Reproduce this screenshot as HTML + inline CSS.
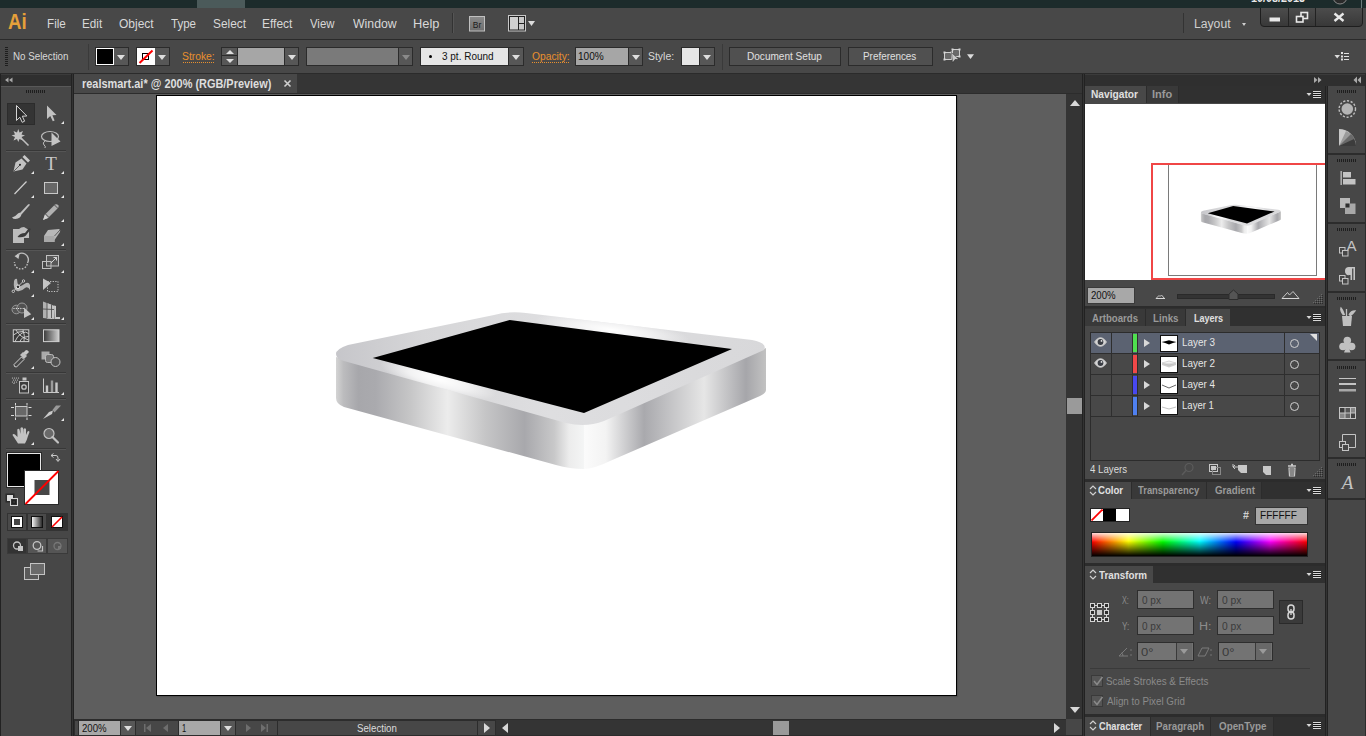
<!DOCTYPE html>
<html><head><meta charset="utf-8">
<style>
*{box-sizing:border-box;margin:0;padding:0}
html,body{width:1366px;height:736px;overflow:hidden;background:#484848;font-family:"Liberation Sans",sans-serif;font-size:12px;color:#dcdcdc}
.a{position:absolute}
.mi{position:absolute;top:16px;font-size:12px;color:#d8d8d8;line-height:16px}
.w{position:absolute;border:1px solid #2b2b2b;background:#575757}
.dd{position:absolute;top:0;bottom:0;background:#575757}
.dd:after{content:"";position:absolute;left:50%;top:50%;margin-left:-4px;margin-top:-2px;border-left:4px solid transparent;border-right:4px solid transparent;border-top:5px solid #dedede}
.dd.dis:after{border-top-color:#8a8a8a}
.lbl{position:absolute;font-size:11px;line-height:13px;color:#d8d8d8}
.org{color:#e8902e}
.dot{border-bottom:1px dotted #e8902e}
.btn{position:absolute;border:1px solid #2b2b2b;background:#505050;color:#e0e0e0;font-size:11px;text-align:center;line-height:17px}
.sep{position:absolute;width:1px;background:#3a3a3a}

</style></head><body>
<!-- taskbar strip -->
<div class="a" style="left:0;top:0;width:1366px;height:8px;background:#1c2b2b"></div>
<div class="a" style="left:197px;top:0;width:48px;height:8px;background:#4b5a5a"></div>
<!-- menu bar -->
<div class="a" style="left:0;top:8px;width:1366px;height:31px;background:#484848"></div>
<div class="a" style="left:0;top:39px;width:1366px;height:1px;background:#2a2a2a"></div>
<!-- control bar -->
<div class="a" style="left:0;top:40px;width:1366px;height:33px;background:#484848"></div>
<div class="a" style="left:0;top:73px;width:1366px;height:1px;background:#2b2b2b"></div>

<!-- control bar content -->
<div class="a" style="left:5px;top:47px;width:3px;height:20px;background:repeating-linear-gradient(#1e1e1e 0 1px,transparent 1px 2px)"></div>
<div class="sep" style="left:88px;top:44px;height:26px"></div>
<div class="w" style="left:95px;top:47px;width:34px;height:19px">
 <div class="a" style="left:0;top:0;width:18px;height:17px;background:#000;border:1px solid #fff"></div>
 <div class="dd" style="left:18px;width:14px"></div>
</div>
<div class="w" style="left:136px;top:47px;width:34px;height:19px">
 <div class="a" style="left:0;top:0;width:18px;height:17px;background:#fff"></div>
 <div class="a" style="left:5px;top:5px;width:7px;height:7px;border:1px solid #000"></div>
 <svg class="a" style="left:0;top:0" width="18" height="17"><line x1="2.5" y1="15" x2="15.5" y2="2.5" stroke="#f00" stroke-width="2"/></svg>
 <div class="dd" style="left:18px;width:14px"></div>
</div>
<div class="w" style="left:221px;top:47px;width:78px;height:19px">
 <div class="a" style="left:0;top:0;width:15px;height:8px;background:#575757;border-bottom:1px solid #2b2b2b"></div>
 <div class="a" style="left:4px;top:2px;border-left:4px solid transparent;border-right:4px solid transparent;border-bottom:4px solid #dedede"></div>
 <div class="a" style="left:0;top:9px;width:15px;height:8px;background:#575757"></div>
 <div class="a" style="left:4px;top:11px;border-left:4px solid transparent;border-right:4px solid transparent;border-top:4px solid #dedede"></div>
 <div class="a" style="left:15px;top:0;width:47px;height:17px;background:#a6a6a6;border-left:1px solid #2b2b2b"></div>
 <div class="dd" style="left:62px;width:14px;border-left:1px solid #2b2b2b"></div>
</div>
<div class="w" style="left:306px;top:47px;width:107px;height:19px">
 <div class="a" style="left:0;top:0;width:91px;height:17px;background:#7a7a7a"></div>
 <div class="dd dis" style="left:91px;width:14px;border-left:1px solid #2b2b2b"></div>
</div>
<div class="w" style="left:420px;top:47px;width:104px;height:19px">
 <div class="a" style="left:0;top:0;width:87px;height:17px;background:#e6e6e6"></div>
 <div class="a" style="left:8px;top:7px;width:3px;height:3px;border-radius:50%;background:#000"></div>
 <div class="dd" style="left:87px;width:15px;border-left:1px solid #2b2b2b"></div>
</div>
<div class="w" style="left:575px;top:47px;width:68px;height:19px">
 <div class="a" style="left:0;top:0;width:52px;height:17px;background:#a6a6a6"></div>
 <div class="dd" style="left:52px;width:14px;border-left:1px solid #2b2b2b"></div>
</div>
<div class="w" style="left:681px;top:47px;width:34px;height:19px">
 <div class="a" style="left:0;top:0;width:17px;height:17px;background:#e6e6e6"></div>
 <div class="dd" style="left:17px;width:15px;border-left:1px solid #2b2b2b"></div>
</div>
<div class="sep" style="left:722px;top:44px;height:26px"></div>
<div class="btn" style="left:729px;top:47px;width:112px;height:19px"></div>
<div class="btn" style="left:848px;top:47px;width:85px;height:19px"></div>
<!-- menu bar extras -->
<div class="a" style="left:452px;top:13px;width:1px;height:20px;background:#333"></div>
<div class="a" style="left:453px;top:13px;width:1px;height:20px;background:#555"></div>
<svg class="a" style="left:466px;top:13px" width="24" height="20">
<defs><linearGradient id="brg" x1="0" y1="0" x2="0" y2="1"><stop offset="0" stop-color="#8a8a8a"/><stop offset="1" stop-color="#6e6e6e"/></linearGradient></defs>
<rect x="3.5" y="3" width="15" height="15" fill="#222"/>
<rect x="3.5" y="3.5" width="15" height="14.5" fill="url(#brg)" stroke="#c0c0c0"/>
<text x="11" y="14.5" font-family="Liberation Sans" font-size="8.5" fill="#1a1a1a" text-anchor="middle">Br</text>
</svg>
<svg class="a" style="left:506px;top:13px" width="32" height="20">
<rect x="2.5" y="2.5" width="17" height="15.5" fill="#222" stroke="#c8c8c8"/>
<rect x="4" y="4" width="8" height="12.5" fill="#d0d0d0"/>
<rect x="13" y="4" width="5" height="6" fill="#c8c8c8"/>
<rect x="13" y="11" width="5" height="5.5" fill="#c8c8c8"/>
<path d="M22,8 L29,8 L25.5,13 Z" fill="#dcdcdc"/>
</svg>
<div class="a" style="left:1183px;top:13px;width:1px;height:20px;background:#333"></div>
<div class="a" style="left:1242px;top:23px;border-left:2.5px solid transparent;border-right:2.5px solid transparent;border-top:3px solid #cfcfcf"></div>
<svg class="a" style="left:1250px;top:0" width="116" height="30">
<text x="1" y="1.8" font-family="Liberation Sans" font-size="13" font-weight="bold" fill="#e8e8e8" textLength="54" lengthAdjust="spacingAndGlyphs">10/08/2015</text>
<circle cx="90" cy="-3" r="7" fill="#2a2a2a" stroke="#888" stroke-width="1"/>
<rect x="111" y="0" width="1" height="8" fill="#6a7a7a"/>
<defs><linearGradient id="wbg" x1="0" y1="0" x2="0" y2="1"><stop offset="0" stop-color="#4c4c4c"/><stop offset="1" stop-color="#383838"/></linearGradient></defs>
<path d="M10.5,8 L10.5,23 Q10.5,26.5 14,26.5 L109,26.5 Q112.5,26.5 112.5,23 L112.5,8" fill="url(#wbg)" stroke="#1e1e1e"/>
<rect x="38" y="8" width="1" height="18" fill="#222"/><rect x="65" y="8" width="1" height="18" fill="#222"/>
<rect x="19.5" y="17.5" width="10.5" height="4" fill="#e8e8e8"/>
<rect x="51" y="12.5" width="6.5" height="6" fill="none" stroke="#e8e8e8" stroke-width="1.6"/>
<rect x="46.5" y="16.5" width="6.5" height="5.5" fill="#383838" stroke="#e8e8e8" stroke-width="1.6"/>
<path d="M84.5,13.5 L93.5,21 M93.5,13.5 L84.5,21" stroke="#e8e8e8" stroke-width="2.3"/>
</svg>
<!-- control bar extras -->
<svg class="a" style="left:940px;top:46px" width="40" height="20">
<rect x="4.5" y="6.5" width="7" height="7" fill="#6a6a6a" stroke="#d0d0d0"/>
<rect x="12.5" y="3.5" width="7" height="7" fill="#6a6a6a" stroke="#d0d0d0"/>
<g fill="#d8d8d8"><rect x="3.5" y="5.5" width="2" height="2"/><rect x="3.5" y="12.5" width="2" height="2"/><rect x="10.5" y="5.5" width="2" height="2"/><rect x="11.5" y="2.5" width="2" height="2"/><rect x="18.5" y="2.5" width="2" height="2"/><rect x="18.5" y="9.5" width="2" height="2"/></g>
<path d="M11.5,6.5 L12.5,17 L15,13.5 L19,13.5 Z" fill="#c8c8c8" stroke="#222" stroke-width="0.5"/>
<path d="M27,8.2 L34,8.2 L30.5,13 Z" fill="#dcdcdc"/>
</svg>
<svg class="a" style="left:1334px;top:50px" width="18" height="12">
<path d="M0.5,5 L6,5 L3.2,8.5 Z" fill="#dcdcdc"/>
<g fill="#e0e0e0"><rect x="7" y="2" width="2" height="2"/><rect x="7" y="5.5" width="2" height="2"/><rect x="7" y="8.5" width="2" height="2"/><rect x="10" y="3" width="5" height="1"/><rect x="10" y="6" width="5" height="1"/><rect x="10" y="9" width="5" height="1"/></g>
</svg>
<div class="a" style="left:183px;top:62px;width:31px;height:1px;background:repeating-linear-gradient(to right,#e8902e 0 1px,transparent 1px 2px)"></div>
<div class="a" style="left:532px;top:62px;width:37px;height:1px;background:repeating-linear-gradient(to right,#e8902e 0 1px,transparent 1px 2px)"></div>
<!-- lower area bg -->
<div class="a" style="left:0;top:74px;width:1366px;height:662px;background:#2c2c2c"></div>
<!-- left toolbar -->
<div class="a" style="left:1px;top:74px;width:70px;height:12px;background:#2f2f2f"></div>
<div class="a" style="left:1px;top:86px;width:70px;height:650px;background:#474747"></div>

<div class="a" style="left:1px;top:74px;width:70px;height:1px;background:#3b3b3b"></div>
<div class="a" style="left:1px;top:86px;width:70px;height:1px;background:#585858"></div>
<div class="a" style="left:0;top:74px;width:1px;height:662px;background:#222"></div>
<!-- toolbar icons -->
<svg class="a" style="left:0;top:0" width="72" height="600" viewBox="0 0 72 600">
<g fill="#a8a8a8"><path d="M5,80 L8.5,77.5 L8.5,82.5 Z"/><path d="M9,80 L12.5,77.5 L12.5,82.5 Z"/></g>
<g fill="#1e1e1e"><rect x="26" y="90" width="1" height="3"/><rect x="28" y="90" width="1" height="3"/><rect x="30" y="90" width="1" height="3"/><rect x="32" y="90" width="1" height="3"/><rect x="34" y="90" width="1" height="3"/><rect x="36" y="90" width="1" height="3"/><rect x="38" y="90" width="1" height="3"/><rect x="40" y="90" width="1" height="3"/><rect x="42" y="90" width="1" height="3"/><rect x="44" y="90" width="1" height="3"/></g>
<g stroke="#373737" stroke-width="1"><line x1="6" y1="150.5" x2="66" y2="150.5"/><line x1="6" y1="249.5" x2="66" y2="249.5"/><line x1="6" y1="323.5" x2="66" y2="323.5"/><line x1="6" y1="372.5" x2="66" y2="372.5"/><line x1="6" y1="398.5" x2="66" y2="398.5"/><line x1="6" y1="448.5" x2="66" y2="448.5"/></g>
<g stroke="#555" stroke-width="1"><line x1="6" y1="151.5" x2="66" y2="151.5"/><line x1="6" y1="250.5" x2="66" y2="250.5"/><line x1="6" y1="324.5" x2="66" y2="324.5"/><line x1="6" y1="373.5" x2="66" y2="373.5"/><line x1="6" y1="399.5" x2="66" y2="399.5"/><line x1="6" y1="449.5" x2="66" y2="449.5"/></g>
<rect x="7.5" y="103.5" width="27" height="21" fill="#343434" stroke="#2c2c2c"/>
<!-- flyout triangles -->
<g fill="#e6e6e6">
<path d="M61,124 L64,124 L64,121 Z"/><path d="M31,174 L34,174 L34,171 Z"/><path d="M61,174 L64,174 L64,171 Z"/><path d="M31,198 L34,198 L34,195 Z"/><path d="M61,198 L64,198 L64,195 Z"/><path d="M61,222 L64,222 L64,219 Z"/><path d="M61,246 L64,246 L64,243 Z"/><path d="M31,273 L34,273 L34,270 Z"/><path d="M61,273 L64,273 L64,270 Z"/><path d="M31,297 L34,297 L34,294 Z"/><path d="M31,320 L34,320 L34,317 Z"/><path d="M61,320 L64,320 L64,317 Z"/><path d="M31,369 L34,369 L34,366 Z"/><path d="M31,395 L34,395 L34,392 Z"/><path d="M61,395 L64,395 L64,392 Z"/><path d="M61,421 L64,421 L64,418 Z"/><path d="M31,445 L34,445 L34,442 Z"/>
</g>
<!-- selection -->
<path d="M16.5,105.5 L16.5,120.5 L19.8,117.2 L22.2,122.3 L24.6,121.2 L22.3,116.2 L26.8,116 Z" fill="#2a2a2a" stroke="#d4d4d4" stroke-width="1"/>
<!-- direct selection -->
<path d="M47,105.5 L47,119 L50.3,116 L52.8,121.2 L54.6,120.4 L52.4,115.3 L56.5,115 Z" fill="#c2c2c2"/>
<!-- magic wand -->
<path d="M18.3,129 L19.5,132.5 L23,131 L21.5,134.5 L25,135.5 L21.5,137 L23,140.5 L19.5,139 L18.3,142 L17,139 L13.5,140.5 L15,137 L11.5,135.5 L15,134.5 L13.5,131 L17,132.5 Z" fill="#c4c4c4"/>
<line x1="20.5" y1="137.5" x2="28.5" y2="145.5" stroke="#c0c0c0" stroke-width="1.6"/>
<!-- lasso -->
<ellipse cx="50" cy="136.5" rx="8.5" ry="5" fill="none" stroke="#bdbdbd" stroke-width="1.2"/>
<path d="M45,141 q-3,2 -1,4 q2,1 1,3" fill="none" stroke="#bdbdbd" stroke-width="1"/>
<path d="M51.5,132.5 L51.5,146 L60.5,141.5 Z" fill="#c4c4c4"/>
<!-- pen -->
<path d="M13.5,171.5 L15.5,162.5 L21.5,158.5 L26.5,163.5 L22.5,169.5 Z" fill="#c2c2c2"/>
<path d="M22.5,157 L24.5,155 L30,160.5 L28,162.5 Z" fill="#c8c8c8"/>
<line x1="14" y1="171" x2="20" y2="165" stroke="#333" stroke-width="0.7"/>
<circle cx="20" cy="164.8" r="1" fill="#222"/>
<!-- type -->
<text x="51" y="170" font-family="Liberation Serif" font-size="19" fill="#c8c8c8" text-anchor="middle">T</text>
<!-- line -->
<line x1="14.5" y1="194" x2="26.5" y2="181.5" stroke="#cfcfcf" stroke-width="1.2"/>
<!-- rect -->
<rect x="44.5" y="182.5" width="13" height="11" fill="#676767" stroke="#c8c8c8" stroke-width="1"/>
<!-- paintbrush -->
<path d="M20,213 L28,204.5 Q29.5,203.5 29.8,205 L21.5,214.5 Z" fill="#c0c0c0"/>
<path d="M12,217.5 Q16,216 18,213.5 Q20,212 21.5,214 Q21,218.5 15.5,219 Q13,219 12,217.5 Z" fill="#c4c4c4"/>
<!-- pencil -->
<path d="M43,220 L45,214.5 L55,204.5 Q57,203.5 58.5,205.5 Q59,207 58,208 L48,218 Z" fill="#b0b0b0"/>
<path d="M43,220 L45,214.5 L48,218 Z" fill="#d2d2d2"/>
<path d="M54.5,205 L58,208.5" stroke="#333" stroke-width="0.8"/>
<path d="M45.5,214 L48.5,217" stroke="#333" stroke-width="0.8"/>
<!-- blob brush -->
<path d="M13,229 L19,229 Q21,227 24,227 L29,230 L29,238 L24,238 L24,243 L13,243 Z" fill="#bcbcbc"/>
<path d="M17.5,237 Q20,233 25,233 L29,228 L31,229 L27,234 Q25,238 17.5,237 Z" fill="#3a3a3a"/>
<!-- eraser -->
<path d="M44,236 L48,230 L59,229 Q61,230 60,232 L54.5,240 L54.5,242 L44,242 Z" fill="#b8b8b8"/>
<path d="M44,236 L54.5,236 L54.5,242 L44,242 Z" fill="#a8a8a8"/>
<path d="M54.5,236 L60,230" stroke="#444" stroke-width="0.8"/>
<!-- rotate -->
<path d="M16,256.5 A6.5,6.5 0 1 1 27.5,263" fill="none" stroke="#bdbdbd" stroke-width="1.4"/>
<path d="M27.3,264 A6.5,6.5 0 0 1 14.5,262" fill="none" stroke="#bdbdbd" stroke-width="1.4" stroke-dasharray="1.6 1.4"/>
<path d="M14.5,256 L19.5,254 L18.5,259 Z" fill="#c4c4c4"/>
<!-- scale -->
<rect x="46.5" y="255.5" width="12" height="10.5" fill="#575757" stroke="#c0c0c0"/>
<rect x="42.5" y="261.5" width="8.5" height="7" fill="none" stroke="#c0c0c0"/>
<path d="M51,263 L56.5,257.5 M53.5,257.5 L56.5,257.5 L56.5,260.5" stroke="#e0e0e0" stroke-width="0.9" fill="none"/>
<!-- warp / puppet -->
<path d="M14,281 Q15,278 17,279 Q17,283 19,287 Q23,285 26,283 Q29,282 30,285 L30,290 Q28,286 25,288 Q21,292 17,291 Q13,289 14,281 Z" fill="#b4b4b4"/>
<path d="M13.5,291 L23.5,281" stroke="#d0d0d0" stroke-width="0.9"/>
<circle cx="18" cy="286.8" r="1.8" fill="#333" stroke="#e6e6e6" stroke-width="1"/>
<circle cx="13.3" cy="291.3" r="1.2" fill="#333" stroke="#e6e6e6" stroke-width="0.8"/>
<circle cx="23.5" cy="281" r="1.2" fill="#333" stroke="#e6e6e6" stroke-width="0.8"/>
<!-- free transform -->
<rect x="47.5" y="281.5" width="10.5" height="10" fill="none" stroke="#c8c8c8" stroke-dasharray="1.2 1.4"/>
<path d="M43,278.5 L43,290 L51,283 Z" fill="#c4c4c4"/>
<!-- shape builder -->
<circle cx="16.3" cy="309.5" r="4.3" fill="#555" stroke="#9a9a9a"/>
<circle cx="22" cy="308" r="5" fill="#555" stroke="#9a9a9a" fill-opacity="0.7"/>
<path d="M13.5,308.5 L24,308.5" stroke="#f0f0f0" stroke-dasharray="1 1.3"/>
<path d="M24,307.5 L24,318 L31.2,314.3 Z" fill="#c4c4c4"/>
<!-- perspective grid -->
<path d="M43,301.5 L52,305 L52,319 L43,318 Z" fill="#b0b0b0"/>
<path d="M47,303 L52,305 L54,305.8 L54,319 L47,318.5 Z" fill="#c4c4c4"/>
<path d="M48,308.5 L60,310 L60,318.5 L48,318 Z" fill="none"/>
<g stroke="#444" stroke-width="0.8"><line x1="47" y1="302.5" x2="47" y2="318"/><line x1="51.5" y1="304.5" x2="51.5" y2="318"/><line x1="43" y1="309" x2="54" y2="309.5"/></g>
<path d="M54,305.5 L54.5,319 L60,319 L60,317 L56,317 L56,306 Z" fill="#c8c8c8"/>
<!-- mesh -->
<rect x="13.3" y="329.8" width="15.5" height="11.8" fill="#3c3c3c" stroke="#cfcfcf"/>
<path d="M13.5,335 Q18,331 23,331.5 M15,341.5 Q17,336 22,333 Q26,331 28.5,333.5 M20,341.5 Q21,337 28.5,336.5 M23,329.8 Q25,335 24,341.5 M16,330 Q20,337 28.5,340" fill="none" stroke="#d8d8d8" stroke-width="0.9"/>
<!-- gradient -->
<defs><linearGradient id="tgr" x1="0" x2="1"><stop offset="0" stop-color="#3a3a3a"/><stop offset="1" stop-color="#d0d0d0"/></linearGradient></defs>
<rect x="43.5" y="329.8" width="15.5" height="11.8" fill="url(#tgr)" stroke="#cfcfcf"/>
<!-- eyedropper -->
<path d="M14.5,366.5 L14,364.5 L21.5,357 L24,359.5 L16.5,367 Z" fill="none" stroke="#cfcfcf" stroke-width="1"/>
<path d="M20,355 L23,352 L27,356 L24,359 Z" fill="#c0c0c0"/>
<path d="M23,353 L26,350 Q28,350 29,352 L26,355 Z" fill="#c8c8c8"/>
<!-- blend -->
<rect x="41.5" y="351.5" width="8" height="8" fill="#aaa"/>
<rect x="45.5" y="354.5" width="8" height="8" rx="2" fill="#707070" stroke="#bbb"/>
<circle cx="55.5" cy="362" r="4.5" fill="#505050" stroke="#c4c4c4"/>
<!-- symbol sprayer -->
<g fill="#cfcfcf"><circle cx="12.5" cy="378" r="0.6"/><circle cx="14.5" cy="378" r="0.6"/><circle cx="16.5" cy="378" r="0.6"/><circle cx="13.5" cy="380" r="0.6"/><circle cx="15.5" cy="380" r="0.6"/><circle cx="17.5" cy="380" r="0.6"/><circle cx="12.5" cy="382" r="0.6"/><circle cx="14.5" cy="382" r="0.6"/><circle cx="16.5" cy="382" r="0.6"/><circle cx="18.5" cy="378" r="0.6"/><circle cx="14" cy="383.5" r="0.6"/></g>
<rect x="22.5" y="377.5" width="4" height="3" fill="#c4c4c4"/>
<rect x="19.5" y="381.5" width="9" height="11.5" fill="#3c3c3c" stroke="#c4c4c4"/>
<circle cx="24" cy="387" r="2.2" fill="none" stroke="#c4c4c4" stroke-width="1.3"/>
<!-- graph -->
<path d="M43.5,378.5 L43.5,392.5 L59,392.5" fill="none" stroke="#c8c8c8"/>
<rect x="45.8" y="385.5" width="2.4" height="6.5" fill="#c8c8c8"/>
<rect x="50.8" y="380.5" width="2.4" height="11.5" fill="#9c9c9c"/>
<rect x="55.3" y="382.5" width="2.4" height="9.5" fill="#c8c8c8"/>
<!-- artboard -->
<rect x="15.5" y="406.5" width="11.5" height="9.5" fill="#686868" stroke="#c8c8c8"/>
<g stroke="#d8d8d8"><path d="M15.5,403 v2.5 M27,403 v2.5 M15.5,417.5 v2.5 M27,417.5 v2.5 M11,407.5 h3 M28.5,407.5 h3 M11,415.5 h3 M28.5,415.5 h3"/></g>
<!-- slice -->
<path d="M43,419 L49,412 L53,410.5 L52,414 Z" fill="#cacaca"/>
<path d="M52.5,410 L56,405.5 L61,405.5 L54.5,412.5 Z" fill="#999"/>
<!-- hand -->
<path d="M18,443.5 L25,443.5 Q27,440 28,436 L29.5,432 Q29,430.5 27.5,431.5 L26,435 L26,429 Q25,427.5 23.5,429 L23.5,434 L23,428 Q22,426.5 20.5,428 L20.5,434 L19.5,429.5 Q18.5,428 17.3,429.5 L17.5,437 L15,434.5 Q13,433.5 12.5,435 Z" fill="#c2c2c2"/>
<!-- zoom -->
<circle cx="49" cy="433.5" r="5" fill="#6a6a6a" stroke="#c2c2c2" stroke-width="1.2"/>
<line x1="52.5" y1="437" x2="58" y2="442.5" stroke="#c2c2c2" stroke-width="2.2" stroke-linecap="round"/>
<!-- fill / stroke -->
<rect x="7.5" y="453.5" width="33" height="33" fill="#000" stroke="#e8e8e8"/>
<rect x="6.5" y="452.5" width="35" height="35" fill="none" stroke="#2a2a2a"/>
<rect x="24.5" y="470.5" width="34" height="34" fill="#fff" stroke="#2a2a2a"/>
<rect x="34.5" y="480" width="15" height="15" fill="#474747"/>
<line x1="25.5" y1="504" x2="58.5" y2="471" stroke="#f00" stroke-width="1.8"/>
<path d="M51,455.5 L53.5,453.5 M51,455.5 L53.5,457.5 M51,455.5 L56,455.5 Q58,455.5 58,458 L58,461 M56,459 L58,461.5 L60,459" fill="none" stroke="#c8c8c8" stroke-width="1"/>
<rect x="5.5" y="493.5" width="9" height="9" fill="#2a2a2a"/><rect x="6.5" y="494.5" width="7" height="7" fill="#ddd" stroke="#2a2a2a"/><rect x="7.5" y="495.5" width="5" height="5" fill="none" stroke="#ddd"/>
<rect x="10.5" y="498.5" width="7" height="7" fill="#333" stroke="#d8d8d8"/><rect x="12.5" y="500.5" width="3" height="3" fill="#333" stroke="#222"/>
<!-- mode buttons -->
<rect x="7" y="513" width="61" height="18" fill="#333"/>
<rect x="8" y="514" width="18" height="16" fill="#4a4a4a"/>
<rect x="28" y="514" width="18" height="16" fill="#4a4a4a"/>
<rect x="49" y="514" width="18" height="16" fill="#333"/>
<rect x="11.5" y="516.5" width="11" height="11" fill="#fff" stroke="#111"/>
<rect x="14" y="519" width="6" height="6" fill="#474747"/>
<defs><linearGradient id="tg2" x1="0" x2="1"><stop offset="0" stop-color="#fff"/><stop offset="1" stop-color="#222"/></linearGradient></defs>
<rect x="31.5" y="516.5" width="11" height="11" fill="url(#tg2)" stroke="#111"/>
<rect x="51.5" y="516.5" width="11" height="11" fill="#fff" stroke="#111"/>
<line x1="52" y1="527" x2="62" y2="517" stroke="#f00" stroke-width="1.6"/>
<!-- draw modes -->
<rect x="7" y="538" width="61" height="16" fill="#3a3a3a"/>
<rect x="8" y="539" width="18" height="14" fill="#333"/>
<rect x="28" y="539" width="18" height="14" fill="#555"/>
<rect x="48" y="539" width="19" height="14" fill="#555"/>
<circle cx="17" cy="545.5" r="3.5" fill="none" stroke="#c4c4c4" stroke-width="1.3"/>
<rect x="18" y="546" width="5" height="5" fill="#c4c4c4"/>
<circle cx="37" cy="545.5" r="3.8" fill="none" stroke="#c4c4c4" stroke-width="1.3"/>
<path d="M37.5,551 L42.5,551 L42.5,546" fill="none" stroke="#c4c4c4" stroke-width="1.2"/>
<circle cx="57.5" cy="546" r="3.5" fill="none" stroke="#777" stroke-width="1.3"/>
<rect x="58" y="546" width="3" height="3" fill="#777"/>
<!-- screen mode -->
<rect x="24.5" y="567.5" width="14" height="12" fill="#5a5a5a" stroke="#c4c4c4"/>
<rect x="30.5" y="563.5" width="14" height="11" fill="#6a6a6a" stroke="#c4c4c4"/>
</svg>
<div class="a" style="left:71px;top:74px;width:3px;height:662px;background:linear-gradient(to right,#222 0 1px,#333 1px 2px,#222 2px 3px)"></div>
<!-- doc tab bar -->
<div class="a" style="left:74px;top:74px;width:1008px;height:19px;background:#353535"></div>
<div class="a" style="left:74px;top:74px;width:223px;height:19px;background:#484848"></div>
<svg class="a" style="left:283px;top:79px" width="9" height="9"><path d="M1.5,1.5 L7.5,7.5 M7.5,1.5 L1.5,7.5" stroke="#d0d0d0" stroke-width="1.6"/></svg>
<!-- canvas -->
<div class="a" style="left:74px;top:94px;width:992px;height:625px;background:#5e5e5e"></div>
<div class="a" style="left:156px;top:95px;width:801px;height:601px;background:#fff;border:1px solid #000;box-shadow:1px 1px 1px rgba(0,0,0,0.12)"></div>

<!-- canvas object -->
<svg class="a" style="left:0;top:0" width="1366" height="736" viewBox="0 0 1366 736">
<defs>
<linearGradient id="gl" gradientUnits="userSpaceOnUse" x1="336" y1="0" x2="584" y2="0">
<stop offset="0" stop-color="#d4d4d4"/><stop offset="0.03" stop-color="#bcbcbe"/><stop offset="0.09" stop-color="#a7a7ab"/><stop offset="0.16" stop-color="#aaaaae"/>
<stop offset="0.3" stop-color="#c6c6c7"/><stop offset="0.45" stop-color="#ececec"/><stop offset="0.6" stop-color="#c6c6c7"/>
<stop offset="0.76" stop-color="#a8a8ac"/><stop offset="0.88" stop-color="#c8c8c9"/><stop offset="0.94" stop-color="#ececec"/><stop offset="1" stop-color="#f4f5f5"/>
</linearGradient>
<linearGradient id="gr" gradientUnits="userSpaceOnUse" x1="584" y1="0" x2="766" y2="0">
<stop offset="0" stop-color="#fbfbfb"/><stop offset="0.12" stop-color="#f3f3f3"/><stop offset="0.33" stop-color="#a9a9ad"/>
<stop offset="0.66" stop-color="#e6e6e6"/><stop offset="0.89" stop-color="#a6a6aa"/><stop offset="1" stop-color="#c2c2c2"/>
</linearGradient>
<linearGradient id="gt" gradientUnits="userSpaceOnUse" x1="336" y1="0" x2="766" y2="0">
<stop offset="0" stop-color="#c6c6ca"/><stop offset="0.2" stop-color="#d6d6d8"/><stop offset="0.5" stop-color="#dedee0"/><stop offset="1" stop-color="#d8d8da"/>
</linearGradient>
<radialGradient id="gh1" gradientUnits="userSpaceOnUse" cx="438" cy="379" r="40" gradientTransform="translate(438 379) rotate(15.5) scale(1.5 0.35) translate(-438 -379)"><stop offset="0" stop-color="#fff" stop-opacity="1"/><stop offset="0.5" stop-color="#fff" stop-opacity="0.7"/><stop offset="1" stop-color="#fff" stop-opacity="0"/></radialGradient>
<radialGradient id="gh2" gradientUnits="userSpaceOnUse" cx="612" cy="330" r="60" gradientTransform="translate(612 330) rotate(7.5) scale(1.3 0.22) translate(-612 -330)"><stop offset="0" stop-color="#fff" stop-opacity="1"/><stop offset="0.5" stop-color="#fff" stop-opacity="0.6"/><stop offset="1" stop-color="#fff" stop-opacity="0"/></radialGradient>
</defs>
<g id="slab">
<path d="M336,357 L584,425 L584,469 Q570,469 556,465 L344,407 Q336,404 336,398 Z" fill="url(#gl)"/>
<path d="M584,425 L766,348 L766,390 Q766,393 760,396 L610,461 Q596,468 584,469 Z" fill="url(#gr)"/>
<path d="M336,354 Q336,349 348,345 L494,315 Q509,311 526,313 L752,340 Q768,343 764,350 L604,421 Q586,428 566,423 L344,361 Q336,359 336,354 Z" fill="url(#gt)"/>
<path d="M336,354 Q336,349 348,345 L494,315 Q509,311 526,313 L752,340 Q768,343 764,350 L604,421 Q586,428 566,423 L344,361 Q336,359 336,354 Z" fill="url(#gh1)"/>
<path d="M336,354 Q336,349 348,345 L494,315 Q509,311 526,313 L752,340 Q768,343 764,350 L604,421 Q586,428 566,423 L344,361 Q336,359 336,354 Z" fill="url(#gh2)"/>
<path d="M372.7,358 L509.7,320 L732,349 L584,413 Z" fill="#000"/>
</g>
</svg>
<!-- v scrollbar -->
<div class="a" style="left:1066px;top:94px;width:16px;height:625px;background:#343434"></div>
<!-- v scrollbar arrows -->
<div class="a" style="left:1070px;top:100px;border-left:5px solid transparent;border-right:5px solid transparent;border-bottom:6px solid #d8d8d8"></div>
<div class="a" style="left:1067px;top:398px;width:15px;height:16px;background:#9a9a9a"></div>
<div class="a" style="left:1070px;top:707px;border-left:5px solid transparent;border-right:5px solid transparent;border-top:6px solid #d8d8d8"></div>
<!-- status bar -->
<div class="a" style="left:74px;top:719px;width:1008px;height:17px;background:#2c2c2c"></div>
<div class="a" style="left:75px;top:721px;width:3px;height:14px;background:#474747"></div>
<div class="a" style="left:79px;top:721px;width:41px;height:14px;background:#a8a8a8"></div>
<div class="dd" style="left:121px;top:721px;width:14px;height:14px;bottom:auto;background:#575757"></div>
<div class="a" style="left:136px;top:721px;width:42px;height:14px;background:#474747"></div>
<svg class="a" style="left:136px;top:721px" width="42" height="14"><g fill="#6e6e6e"><rect x="8" y="3" width="1.5" height="8"/><path d="M10,7 L15,3 L15,11 Z"/><path d="M27,7 L32,3 L32,11 Z"/></g></svg>
<div class="a" style="left:179px;top:721px;width:41px;height:14px;background:#a8a8a8"></div>
<div class="dd" style="left:221px;top:721px;width:14px;height:14px;bottom:auto;background:#575757"></div>
<div class="a" style="left:236px;top:721px;width:41px;height:14px;background:#474747"></div>
<svg class="a" style="left:236px;top:721px" width="42" height="14"><g fill="#6e6e6e"><path d="M10,3 L15,7 L10,11 Z"/><path d="M25,3 L30,7 L25,11 Z"/><rect x="30.5" y="3" width="1.5" height="8"/></g></svg>
<div class="a" style="left:278px;top:721px;width:199px;height:14px;background:#474747"></div>
<div class="a" style="left:478px;top:721px;width:17px;height:14px;background:#474747"></div>
<div class="a" style="left:484px;top:723px;border-top:5px solid transparent;border-bottom:5px solid transparent;border-left:6px solid #d8d8d8"></div>
<div class="a" style="left:496px;top:720px;width:570px;height:15px;background:#343434"></div>
<div class="a" style="left:502px;top:723px;border-top:5px solid transparent;border-bottom:5px solid transparent;border-right:6px solid #d8d8d8"></div>
<div class="a" style="left:773px;top:721px;width:16px;height:14px;background:#9a9a9a"></div>
<div class="a" style="left:1054px;top:723px;border-top:5px solid transparent;border-bottom:5px solid transparent;border-left:6px solid #d8d8d8"></div>
<div class="a" style="left:1066px;top:719px;width:16px;height:16px;background:#474747"></div>

<!-- right panels -->
<div class="a" style="left:1085px;top:74px;width:281px;height:12px;background:#2f2f2f"></div>
<svg class="a" style="left:1286px;top:75px" width="80" height="10"><g fill="#aaa"><path d="M28,2 L31.5,5 L28,8 Z"/><path d="M32,2 L35.5,5 L32,8 Z"/><path d="M67.5,5 L71,1.5 L71,8.5 Z"/><path d="M71.5,5 L75,1.5 L75,8.5 Z"/></g></svg>
<div class="a" style="left:1085px;top:74px;width:281px;height:1px;background:#3b3b3b"></div>
<div class="a" style="left:1328px;top:86px;width:37px;height:1px;background:#585858"></div>
<!-- navigator panel -->
<div class="a" style="left:1085px;top:86px;width:240px;height:220px;background:#484848"></div>
<div class="a" style="left:1085px;top:86px;width:240px;height:17px;background:#303030"></div>
<div class="a" style="left:1085px;top:86px;width:61px;height:17px;background:#484848"></div>
<div class="a" style="left:1146px;top:86px;width:33px;height:17px;background:#393939;border-left:1px solid #2c2c2c;border-right:1px solid #2c2c2c"></div>
<svg class="a" style="left:1306px;top:91px" width="16" height="9"><path d="M0.5,2 L5.5,2 L3,5 Z" fill="#d8d8d8"/><g fill="#161616"><rect x="7" y="1" width="8" height="1"/><rect x="7" y="3" width="8" height="1"/><rect x="7" y="5" width="8" height="1"/></g><g fill="#d8d8d8"><rect x="7" y="0" width="8" height="1"/><rect x="7" y="2" width="8" height="1"/><rect x="7" y="4" width="8" height="1"/><rect x="7" y="6" width="8" height="1"/></g></svg>
<div class="a" style="left:1085px;top:104px;width:240px;height:176px;background:#fff;overflow:hidden">
 <div class="a" style="left:83px;top:60px;width:149px;height:112px;border:1px solid #7a7a7a"></div>
 <div class="a" style="left:66px;top:59px;width:200px;height:117px;border:2px solid #f04646"></div>
</div>
<div class="a" style="left:1087px;top:287px;width:48px;height:17px;background:#a8a8a8;border:1px solid #3a3a3a"></div>
<svg class="a" style="left:1150px;top:286px" width="176" height="20"><g fill="none" stroke="#c8c8c8" stroke-width="1"><path d="M6,12.5 L14.5,12.5 L11.5,9 L10,10.5 L9,9.5 Z"/><path d="M132,12.5 L149,12.5 L143,5.5 L139.5,9 L137.5,6.5 Z"/></g><rect x="6" y="12" width="9" height="1" fill="#d8d8d8"/><rect x="132" y="12" width="17" height="1" fill="#d8d8d8"/>
<rect x="27.5" y="8.5" width="97" height="4" fill="#333" stroke="#2a2a2a"/>
<path d="M79,13.5 L79,8 L83.5,4 L88,8 L88,13.5 Z" fill="#555" stroke="#2e2e2e"/>
</svg>
<div class="a" style="left:1085px;top:306px;width:240px;height:2px;background:#2c2c2c"></div>
<!-- layers panel -->
<div class="a" style="left:1085px;top:308px;width:240px;height:171px;background:#484848"></div>
<div class="a" style="left:1085px;top:308px;width:240px;height:18px;background:#303030"></div>
<div class="a" style="left:1085px;top:309px;width:61px;height:17px;background:#393939;border-right:1px solid #2c2c2c"></div>
<div class="a" style="left:1146px;top:309px;width:40px;height:17px;background:#393939;border-right:1px solid #2c2c2c"></div>
<div class="a" style="left:1186px;top:309px;width:44px;height:18px;background:#484848"></div>
<svg class="a" style="left:1306px;top:314px" width="16" height="9"><path d="M0.5,2 L5.5,2 L3,5 Z" fill="#d8d8d8"/><g fill="#161616"><rect x="7" y="1" width="8" height="1"/><rect x="7" y="3" width="8" height="1"/><rect x="7" y="5" width="8" height="1"/></g><g fill="#d8d8d8"><rect x="7" y="0" width="8" height="1"/><rect x="7" y="2" width="8" height="1"/><rect x="7" y="4" width="8" height="1"/><rect x="7" y="6" width="8" height="1"/></g></svg>
<div class="a" style="left:1090px;top:332px;width:230px;height:129px;background:#474747;border:1px solid #2c2c2c"></div>
<div class="a" style="left:1091px;top:333px;width:228px;height:20px;background:#5b6271"></div><div class="a" style="left:1091px;top:353px;width:228px;height:1px;background:#2e2e2e"></div><div class="a" style="left:1111px;top:333px;width:1px;height:20px;background:#2e2e2e"></div><div class="a" style="left:1132px;top:333px;width:1px;height:20px;background:#2e2e2e"></div><div class="a" style="left:1133px;top:334px;width:4px;height:18px;background:#4fe04f"></div><div class="a" style="left:1137px;top:333px;width:1px;height:20px;background:#2e2e2e"></div><div class="a" style="left:1284px;top:333px;width:1px;height:20px;background:#2e2e2e"></div><div class="a" style="left:1144px;top:339px;border-top:4px solid transparent;border-bottom:4px solid transparent;border-left:6px solid #d8d8d8"></div><div class="a" style="left:1160px;top:335px;width:18px;height:17px;background:#fff;border:1px solid #111"></div><div class="a" style="left:1290px;top:339px;width:9px;height:9px;border:1px solid #d0d0d0;border-radius:50%"></div><svg class="a" style="left:1093px;top:336px" width="16" height="12"><path d="M1,6 Q7.5,-3.5 14,6 Q7.5,15.5 1,6 Z" fill="#c4c4c4"/><path d="M2.5,6 Q7.5,-1.5 12.5,6 Q7.5,13.5 2.5,6 Z" fill="#dadada"/><circle cx="7.5" cy="6" r="2.9" fill="#3a3d44"/><circle cx="8.5" cy="4.9" r="0.9" fill="#e8e8e8"/></svg><div class="a" style="left:1091px;top:354px;width:228px;height:20px;background:#484848"></div><div class="a" style="left:1091px;top:374px;width:228px;height:1px;background:#2e2e2e"></div><div class="a" style="left:1111px;top:354px;width:1px;height:20px;background:#2e2e2e"></div><div class="a" style="left:1132px;top:354px;width:1px;height:20px;background:#2e2e2e"></div><div class="a" style="left:1133px;top:355px;width:4px;height:18px;background:#f04848"></div><div class="a" style="left:1137px;top:354px;width:1px;height:20px;background:#2e2e2e"></div><div class="a" style="left:1284px;top:354px;width:1px;height:20px;background:#2e2e2e"></div><div class="a" style="left:1144px;top:360px;border-top:4px solid transparent;border-bottom:4px solid transparent;border-left:6px solid #d8d8d8"></div><div class="a" style="left:1160px;top:356px;width:18px;height:17px;background:#fff;border:1px solid #111"></div><div class="a" style="left:1290px;top:360px;width:9px;height:9px;border:1px solid #d0d0d0;border-radius:50%"></div><svg class="a" style="left:1093px;top:357px" width="16" height="12"><path d="M1,6 Q7.5,-3.5 14,6 Q7.5,15.5 1,6 Z" fill="#c4c4c4"/><path d="M2.5,6 Q7.5,-1.5 12.5,6 Q7.5,13.5 2.5,6 Z" fill="#dadada"/><circle cx="7.5" cy="6" r="2.9" fill="#3a3d44"/><circle cx="8.5" cy="4.9" r="0.9" fill="#e8e8e8"/></svg><div class="a" style="left:1091px;top:375px;width:228px;height:20px;background:#484848"></div><div class="a" style="left:1091px;top:395px;width:228px;height:1px;background:#2e2e2e"></div><div class="a" style="left:1111px;top:375px;width:1px;height:20px;background:#2e2e2e"></div><div class="a" style="left:1132px;top:375px;width:1px;height:20px;background:#2e2e2e"></div><div class="a" style="left:1133px;top:376px;width:4px;height:18px;background:#4848f0"></div><div class="a" style="left:1137px;top:375px;width:1px;height:20px;background:#2e2e2e"></div><div class="a" style="left:1284px;top:375px;width:1px;height:20px;background:#2e2e2e"></div><div class="a" style="left:1144px;top:381px;border-top:4px solid transparent;border-bottom:4px solid transparent;border-left:6px solid #d8d8d8"></div><div class="a" style="left:1160px;top:377px;width:18px;height:17px;background:#fff;border:1px solid #111"></div><div class="a" style="left:1290px;top:381px;width:9px;height:9px;border:1px solid #d0d0d0;border-radius:50%"></div><div class="a" style="left:1091px;top:396px;width:228px;height:20px;background:#484848"></div><div class="a" style="left:1091px;top:416px;width:228px;height:1px;background:#2e2e2e"></div><div class="a" style="left:1111px;top:396px;width:1px;height:20px;background:#2e2e2e"></div><div class="a" style="left:1132px;top:396px;width:1px;height:20px;background:#2e2e2e"></div><div class="a" style="left:1133px;top:397px;width:4px;height:18px;background:#4f80f0"></div><div class="a" style="left:1137px;top:396px;width:1px;height:20px;background:#2e2e2e"></div><div class="a" style="left:1284px;top:396px;width:1px;height:20px;background:#2e2e2e"></div><div class="a" style="left:1144px;top:402px;border-top:4px solid transparent;border-bottom:4px solid transparent;border-left:6px solid #d8d8d8"></div><div class="a" style="left:1160px;top:398px;width:18px;height:17px;background:#fff;border:1px solid #111"></div><div class="a" style="left:1290px;top:402px;width:9px;height:9px;border:1px solid #d0d0d0;border-radius:50%"></div><svg class="a" style="left:1161px;top:336px" width="16" height="80">
<path d="M0.5,6 Q4,5.5 8,4.2 Q12,5.5 15.5,6 Q12,6.8 8,8.5 Q4,6.8 0.5,6 Z" fill="#000"/>
<path d="M1,27 L8,25 L15,27 L8,29.5 Z" fill="#f2f2f2" stroke="#ccc" stroke-width="0.8"/><path d="M1,27.5 L1,29 L8,31.5 L15,29 L15,27.5" fill="#bbb" stroke="none" opacity="0.7"/>
<path d="M1,49 L8,52 L15,49" fill="none" stroke="#555" stroke-width="0.9"/>
<path d="M1,71 L8,73 L15,71" fill="none" stroke="#aaa" stroke-width="0.7"/>
</svg>
<div class="a" style="left:1310px;top:334px;border-left:7px solid transparent;border-top:7px solid #e0e0e0"></div>
<svg class="a" style="left:1180px;top:462px" width="146" height="16">
<circle cx="9" cy="5.5" r="4" fill="none" stroke="#5c5c5c" stroke-width="1.2"/><line x1="6" y1="8.5" x2="2" y2="13" stroke="#5c5c5c" stroke-width="1.4"/>
<rect x="29.5" y="2.5" width="8" height="7" fill="none" stroke="#c8c8c8"/><rect x="32.5" y="5.5" width="8" height="7" fill="none" stroke="#888"/><rect x="31" y="4" width="5" height="4" fill="#c8c8c8"/>
<path d="M53,2 L53,5 L58,5 M55,3 L53,5 L55,7" fill="none" stroke="#c8c8c8"/><path d="M58,3 L67,3 L67,11 L61,11 L58,8 Z" fill="#c8c8c8"/>
<path d="M83,4 L91,4 L91,13 L86,13 L83,10 Z" fill="#c8c8c8"/>
<path d="M108,4 L116,4 M111,2.5 L113,2.5" stroke="#c8c8c8" stroke-width="1.3"/><path d="M109,6 L115,6 L114.5,14 L109.5,14 Z" fill="none" stroke="#c8c8c8" stroke-width="1.2"/><path d="M111,7 L111,13 M113,7 L113,13" stroke="#c8c8c8"/>
</svg>
<svg class="a" style="left:1313px;top:467px" width="11" height="11"><g fill="#6a6a6a"><rect x="8" y="0" width="1" height="1"/><rect x="6" y="2" width="1" height="1"/><rect x="8" y="2" width="1" height="1"/><rect x="4" y="4" width="1" height="1"/><rect x="6" y="4" width="1" height="1"/><rect x="8" y="4" width="1" height="1"/><rect x="2" y="6" width="1" height="1"/><rect x="4" y="6" width="1" height="1"/><rect x="6" y="6" width="1" height="1"/><rect x="8" y="6" width="1" height="1"/><rect x="0" y="8" width="1" height="1"/><rect x="2" y="8" width="1" height="1"/><rect x="4" y="8" width="1" height="1"/><rect x="6" y="8" width="1" height="1"/><rect x="8" y="8" width="1" height="1"/></g><g fill="#2a2a2a"><rect x="9" y="1" width="1" height="1"/><rect x="7" y="3" width="1" height="1"/><rect x="9" y="3" width="1" height="1"/><rect x="5" y="5" width="1" height="1"/><rect x="7" y="5" width="1" height="1"/><rect x="9" y="5" width="1" height="1"/><rect x="3" y="7" width="1" height="1"/><rect x="5" y="7" width="1" height="1"/><rect x="7" y="7" width="1" height="1"/><rect x="9" y="7" width="1" height="1"/><rect x="1" y="9" width="1" height="1"/><rect x="3" y="9" width="1" height="1"/><rect x="5" y="9" width="1" height="1"/><rect x="7" y="9" width="1" height="1"/><rect x="9" y="9" width="1" height="1"/></g></svg><svg class="a" style="left:1313px;top:294px" width="11" height="11"><g fill="#6a6a6a"><rect x="8" y="0" width="1" height="1"/><rect x="6" y="2" width="1" height="1"/><rect x="8" y="2" width="1" height="1"/><rect x="4" y="4" width="1" height="1"/><rect x="6" y="4" width="1" height="1"/><rect x="8" y="4" width="1" height="1"/><rect x="2" y="6" width="1" height="1"/><rect x="4" y="6" width="1" height="1"/><rect x="6" y="6" width="1" height="1"/><rect x="8" y="6" width="1" height="1"/><rect x="0" y="8" width="1" height="1"/><rect x="2" y="8" width="1" height="1"/><rect x="4" y="8" width="1" height="1"/><rect x="6" y="8" width="1" height="1"/><rect x="8" y="8" width="1" height="1"/></g><g fill="#2a2a2a"><rect x="9" y="1" width="1" height="1"/><rect x="7" y="3" width="1" height="1"/><rect x="9" y="3" width="1" height="1"/><rect x="5" y="5" width="1" height="1"/><rect x="7" y="5" width="1" height="1"/><rect x="9" y="5" width="1" height="1"/><rect x="3" y="7" width="1" height="1"/><rect x="5" y="7" width="1" height="1"/><rect x="7" y="7" width="1" height="1"/><rect x="9" y="7" width="1" height="1"/><rect x="1" y="9" width="1" height="1"/><rect x="3" y="9" width="1" height="1"/><rect x="5" y="9" width="1" height="1"/><rect x="7" y="9" width="1" height="1"/><rect x="9" y="9" width="1" height="1"/></g></svg>
<div class="a" style="left:1085px;top:479px;width:240px;height:3px;background:#2c2c2c"></div>
<!-- color panel -->
<div class="a" style="left:1085px;top:482px;width:240px;height:81px;background:#484848"></div>
<div class="a" style="left:1085px;top:482px;width:240px;height:17px;background:#303030"></div>
<div class="a" style="left:1085px;top:482px;width:46px;height:17px;background:#484848"></div>
<div class="a" style="left:1131px;top:482px;width:76px;height:17px;background:#393939;border-left:1px solid #2c2c2c;border-right:1px solid #2c2c2c"></div>
<div class="a" style="left:1207px;top:482px;width:55px;height:17px;background:#393939;border-right:1px solid #2c2c2c"></div>
<svg class="a" style="left:1089px;top:484px" width="8" height="13"><path d="M1,5 L4,2 L7,5 M1,8 L4,11 L7,8" fill="none" stroke="#d0d0d0" stroke-width="1.2"/></svg>
<svg class="a" style="left:1306px;top:487px" width="16" height="9"><path d="M0.5,2 L5.5,2 L3,5 Z" fill="#d8d8d8"/><g fill="#161616"><rect x="7" y="1" width="8" height="1"/><rect x="7" y="3" width="8" height="1"/><rect x="7" y="5" width="8" height="1"/></g><g fill="#d8d8d8"><rect x="7" y="0" width="8" height="1"/><rect x="7" y="2" width="8" height="1"/><rect x="7" y="4" width="8" height="1"/><rect x="7" y="6" width="8" height="1"/></g></svg>
<div class="a" style="left:1090px;top:508px;width:40px;height:14px;background:#222;border:1px solid #222"></div>
<div class="a" style="left:1091px;top:509px;width:12px;height:12px;background:#fff"></div>
<svg class="a" style="left:1091px;top:509px" width="12" height="12"><line x1="0.5" y1="11.5" x2="11.5" y2="0.5" stroke="#f00" stroke-width="1.8"/></svg>
<div class="a" style="left:1103px;top:509px;width:13px;height:12px;background:#000"></div>
<div class="a" style="left:1116px;top:509px;width:13px;height:12px;background:#fff"></div>
<div class="a" style="left:1255px;top:507px;width:53px;height:18px;background:#a8a8a8;border:1px solid #333"></div>
<div class="a" style="left:1091px;top:532px;width:217px;height:25px;border:1px solid #222;background:linear-gradient(to bottom,rgba(0,0,0,0) 0%,rgba(0,0,0,0) 35%,rgba(0,0,0,1) 100%),linear-gradient(to right,#f00 0%,#ff0 17%,#0f0 33%,#0ff 50%,#00f 67%,#f0f 83%,#f00 100%)"></div>
<div class="a" style="left:1092px;top:533px;width:215px;height:9px;background:linear-gradient(to bottom,rgba(255,255,255,0.85),rgba(255,255,255,0))"></div>
<div class="a" style="left:1085px;top:563px;width:240px;height:3px;background:#2c2c2c"></div>
<!-- transform panel -->
<div class="a" style="left:1085px;top:566px;width:240px;height:148px;background:#484848"></div>
<div class="a" style="left:1085px;top:566px;width:240px;height:17px;background:#303030"></div>
<div class="a" style="left:1085px;top:566px;width:68px;height:17px;background:#484848"></div>
<svg class="a" style="left:1089px;top:568px" width="8" height="13"><path d="M1,5 L4,2 L7,5 M1,8 L4,11 L7,8" fill="none" stroke="#d0d0d0" stroke-width="1.2"/></svg>
<svg class="a" style="left:1306px;top:571px" width="16" height="9"><path d="M0.5,2 L5.5,2 L3,5 Z" fill="#d8d8d8"/><g fill="#161616"><rect x="7" y="1" width="8" height="1"/><rect x="7" y="3" width="8" height="1"/><rect x="7" y="5" width="8" height="1"/></g><g fill="#d8d8d8"><rect x="7" y="0" width="8" height="1"/><rect x="7" y="2" width="8" height="1"/><rect x="7" y="4" width="8" height="1"/><rect x="7" y="6" width="8" height="1"/></g></svg>
<svg class="a" style="left:1089px;top:602px" width="22" height="22"><g fill="none" stroke="#d4d4d4" stroke-width="1"><path d="M6,3.5 h2 M13,3.5 h2 M6,17.5 h2 M13,17.5 h2 M3.5,6 v2 M3.5,13 v2 M17.5,6 v2 M17.5,13 v2"/></g><g fill="#2e2e2e" stroke="#d4d4d4" stroke-width="1"><rect x="1.5" y="1.5" width="4" height="4"/><rect x="1.5" y="8.5" width="4" height="4"/><rect x="1.5" y="15.5" width="4" height="4"/><rect x="8.5" y="1.5" width="4" height="4"/><rect x="8.5" y="15.5" width="4" height="4"/><rect x="15.5" y="1.5" width="4" height="4"/><rect x="15.5" y="8.5" width="4" height="4"/><rect x="15.5" y="15.5" width="4" height="4"/></g><rect x="8" y="8" width="5" height="5" fill="#c8c8c8"/></svg>
<div class="a" style="left:1137px;top:590px;width:57px;height:19px;background:#737373;border:1px solid #2e2e2e"></div>
<div class="a" style="left:1217px;top:590px;width:57px;height:19px;background:#737373;border:1px solid #2e2e2e"></div>
<div class="a" style="left:1137px;top:616px;width:57px;height:19px;background:#737373;border:1px solid #2e2e2e"></div>
<div class="a" style="left:1217px;top:616px;width:57px;height:19px;background:#737373;border:1px solid #2e2e2e"></div>
<div class="a" style="left:1279px;top:600px;width:24px;height:24px;background:#3a3a3a;border:1px solid #2a2a2a"></div>
<svg class="a" style="left:1286px;top:604px" width="10" height="16"><rect x="2" y="1" width="6" height="7" rx="3" fill="none" stroke="#d8d8d8" stroke-width="1.5"/><rect x="2" y="8" width="6" height="7" rx="3" fill="none" stroke="#d8d8d8" stroke-width="1.5"/><line x1="5" y1="5" x2="5" y2="11" stroke="#d8d8d8" stroke-width="1.3"/></svg>
<svg class="a" style="left:1118px;top:645px" width="18" height="13"><path d="M1,11 L9,3 M1,11 L10,11 M5,11 Q5,8 3,8" fill="none" stroke="#7a7a7a"/><circle cx="13" cy="5" r="0.8" fill="#7a7a7a"/><circle cx="13" cy="10" r="0.8" fill="#7a7a7a"/></svg>
<div class="a" style="left:1137px;top:642px;width:57px;height:19px;background:#737373;border:1px solid #2e2e2e"></div>
<div class="a" style="left:1176px;top:643px;width:16px;height:17px;background:#686868;border-left:1px solid #3a3a3a"></div>
<div class="a" style="left:1180px;top:649px;border-left:4px solid transparent;border-right:4px solid transparent;border-top:5px solid #9a9a9a"></div>
<svg class="a" style="left:1197px;top:645px" width="18" height="13"><path d="M1,11 L5,3 L12,3 L8,11 Z" fill="none" stroke="#7a7a7a"/><circle cx="14" cy="5" r="0.8" fill="#7a7a7a"/><circle cx="14" cy="10" r="0.8" fill="#7a7a7a"/></svg>
<div class="a" style="left:1218px;top:642px;width:55px;height:19px;background:#737373;border:1px solid #2e2e2e"></div>
<div class="a" style="left:1255px;top:643px;width:16px;height:17px;background:#686868;border-left:1px solid #3a3a3a"></div>
<div class="a" style="left:1259px;top:649px;border-left:4px solid transparent;border-right:4px solid transparent;border-top:5px solid #9a9a9a"></div>
<div class="a" style="left:1090px;top:668px;width:220px;height:1px;background:#3a3a3a"></div>
<div class="a" style="left:1091px;top:675px;width:12px;height:12px;background:#555;border:1px solid #3a3a3a"></div>
<svg class="a" style="left:1092px;top:675px" width="12" height="12"><path d="M2,6 L5,9.5 L10.5,2" fill="none" stroke="#8a8a8a" stroke-width="1.5"/></svg>
<div class="a" style="left:1091px;top:695px;width:12px;height:12px;background:#555;border:1px solid #3a3a3a"></div>
<svg class="a" style="left:1092px;top:695px" width="12" height="12"><path d="M2,6 L5,9.5 L10.5,2" fill="none" stroke="#8a8a8a" stroke-width="1.5"/></svg>
<div class="a" style="left:1085px;top:714px;width:240px;height:3px;background:#2c2c2c"></div>
<!-- character panel tabs -->
<div class="a" style="left:1085px;top:717px;width:240px;height:19px;background:#303030"></div>
<div class="a" style="left:1085px;top:717px;width:65px;height:19px;background:#484848"></div>
<div class="a" style="left:1150px;top:717px;width:61px;height:19px;background:#393939;border-left:1px solid #2c2c2c;border-right:1px solid #2c2c2c"></div>
<div class="a" style="left:1211px;top:717px;width:63px;height:19px;background:#393939;border-right:1px solid #2c2c2c"></div>
<svg class="a" style="left:1089px;top:719px" width="8" height="13"><path d="M1,5 L4,2 L7,5 M1,8 L4,11 L7,8" fill="none" stroke="#d0d0d0" stroke-width="1.2"/></svg>
<svg class="a" style="left:1306px;top:722px" width="16" height="9"><path d="M0.5,2 L5.5,2 L3,5 Z" fill="#d8d8d8"/><g fill="#161616"><rect x="7" y="1" width="8" height="1"/><rect x="7" y="3" width="8" height="1"/><rect x="7" y="5" width="8" height="1"/></g><g fill="#d8d8d8"><rect x="7" y="0" width="8" height="1"/><rect x="7" y="2" width="8" height="1"/><rect x="7" y="4" width="8" height="1"/><rect x="7" y="6" width="8" height="1"/></g></svg>
<!-- icon column -->
<div class="a" style="left:1082px;top:74px;width:3px;height:662px;background:linear-gradient(to right,#222 0 1px,#333 1px 2px,#222 2px 3px)"></div>
<div class="a" style="left:1325px;top:86px;width:3px;height:650px;background:linear-gradient(to right,#222 0 1px,#333 1px 2px,#222 2px 3px)"></div>
<div class="a" style="left:1365px;top:74px;width:1px;height:662px;background:#2c2c2c"></div>
<svg class="a" style="left:0;top:0" width="1366" height="736">
<rect x="1328" y="86" width="37" height="650" fill="#474747"/>
<g fill="#2c2c2c"><rect x="1328" y="153" width="37" height="2"/><rect x="1328" y="222" width="37" height="2"/><rect x="1328" y="291" width="37" height="2"/><rect x="1328" y="359" width="37" height="2"/><rect x="1328" y="457" width="37" height="2"/><rect x="1328" y="498" width="37" height="2"/></g>
<g fill="#1e1e1e"><rect x="1337" y="90" width="1" height="3"/><rect x="1339" y="90" width="1" height="3"/><rect x="1341" y="90" width="1" height="3"/><rect x="1343" y="90" width="1" height="3"/><rect x="1345" y="90" width="1" height="3"/><rect x="1347" y="90" width="1" height="3"/><rect x="1349" y="90" width="1" height="3"/><rect x="1351" y="90" width="1" height="3"/><rect x="1353" y="90" width="1" height="3"/><rect x="1355" y="90" width="1" height="3"/><rect x="1337" y="159" width="1" height="3"/><rect x="1339" y="159" width="1" height="3"/><rect x="1341" y="159" width="1" height="3"/><rect x="1343" y="159" width="1" height="3"/><rect x="1345" y="159" width="1" height="3"/><rect x="1347" y="159" width="1" height="3"/><rect x="1349" y="159" width="1" height="3"/><rect x="1351" y="159" width="1" height="3"/><rect x="1353" y="159" width="1" height="3"/><rect x="1355" y="159" width="1" height="3"/><rect x="1337" y="228" width="1" height="3"/><rect x="1339" y="228" width="1" height="3"/><rect x="1341" y="228" width="1" height="3"/><rect x="1343" y="228" width="1" height="3"/><rect x="1345" y="228" width="1" height="3"/><rect x="1347" y="228" width="1" height="3"/><rect x="1349" y="228" width="1" height="3"/><rect x="1351" y="228" width="1" height="3"/><rect x="1353" y="228" width="1" height="3"/><rect x="1355" y="228" width="1" height="3"/><rect x="1337" y="297" width="1" height="3"/><rect x="1339" y="297" width="1" height="3"/><rect x="1341" y="297" width="1" height="3"/><rect x="1343" y="297" width="1" height="3"/><rect x="1345" y="297" width="1" height="3"/><rect x="1347" y="297" width="1" height="3"/><rect x="1349" y="297" width="1" height="3"/><rect x="1351" y="297" width="1" height="3"/><rect x="1353" y="297" width="1" height="3"/><rect x="1355" y="297" width="1" height="3"/><rect x="1337" y="366" width="1" height="3"/><rect x="1339" y="366" width="1" height="3"/><rect x="1341" y="366" width="1" height="3"/><rect x="1343" y="366" width="1" height="3"/><rect x="1345" y="366" width="1" height="3"/><rect x="1347" y="366" width="1" height="3"/><rect x="1349" y="366" width="1" height="3"/><rect x="1351" y="366" width="1" height="3"/><rect x="1353" y="366" width="1" height="3"/><rect x="1355" y="366" width="1" height="3"/><rect x="1337" y="463" width="1" height="3"/><rect x="1339" y="463" width="1" height="3"/><rect x="1341" y="463" width="1" height="3"/><rect x="1343" y="463" width="1" height="3"/><rect x="1345" y="463" width="1" height="3"/><rect x="1347" y="463" width="1" height="3"/><rect x="1349" y="463" width="1" height="3"/><rect x="1351" y="463" width="1" height="3"/><rect x="1353" y="463" width="1" height="3"/><rect x="1355" y="463" width="1" height="3"/></g>
<circle cx="1347.3" cy="109" r="8.2" fill="none" stroke="#bdbdbd" stroke-width="1.4" stroke-dasharray="2.2 1.6"/>
<circle cx="1347.3" cy="109" r="5.8" fill="#b4b4b4"/>
<path d="M1339,146 L1339,129 A17,17 0 0 1 1356,146 Z" fill="#c8c8c8"/>
<path d="M1339,146 L1346,131 A17,17 0 0 1 1356,146 Z" fill="#9a9a9a"/>
<path d="M1339,146 L1351,134 A17,17 0 0 1 1356,146 Z" fill="#6a6a6a"/>
<path d="M1339,146 L1354,139 A17,17 0 0 1 1356,146 Z" fill="#3c3c3c"/>
<rect x="1340.5" y="171" width="1.3" height="14" fill="#c4c4c4"/>
<rect x="1343" y="172" width="8" height="5.5" fill="#c4c4c4"/>
<rect x="1343" y="179" width="12.5" height="5.5" fill="#c4c4c4"/>
<rect x="1340" y="198" width="10" height="10" fill="#b8b8b8"/>
<rect x="1345" y="203.5" width="10.5" height="10.5" fill="#a8a8a8"/>
<rect x="1345.5" y="203.5" width="4" height="4" fill="#2e2e2e"/>
<text x="1351.5" y="251" font-family="Liberation Sans" font-size="15" fill="#c4c4c4" text-anchor="middle">A</text>
<rect x="1339.5" y="247.5" width="5.5" height="5.5" fill="#474747" stroke="#c4c4c4"/><rect x="1342.5" y="250.5" width="5.5" height="5.5" fill="#474747" stroke="#c4c4c4"/>
<g fill="#c4c4c4"><path d="M1348.5,267 L1355,267 L1355,268.5 L1348.5,268.5 A3.6,3.6 0 0 0 1348.5,275.5 Z"/><rect x="1350.5" y="267" width="1.6" height="13"/><rect x="1353.4" y="267" width="1.6" height="13"/><path d="M1349,267 A4,4 0 0 0 1349,275 L1351,275 L1351,267 Z"/></g>
<rect x="1339.5" y="275.5" width="5.5" height="5.5" fill="#474747" stroke="#c4c4c4"/><rect x="1342.5" y="278.5" width="5.5" height="5.5" fill="#474747" stroke="#c4c4c4"/>
<path d="M1342,316 L1352,316 L1351,326 L1343,326 Z" fill="#c0c0c0"/>
<path d="M1346.5,316 L1346.5,309 M1343.5,315 Q1340,311 1341,308 Q1343,310 1344.5,315 M1349,315 Q1351,311 1355,311 Q1353,314 1350,316" fill="#c0c0c0" stroke="#c0c0c0" stroke-width="1.3"/>
<g fill="#c0c0c0"><circle cx="1347.3" cy="340.5" r="3.8"/><circle cx="1343" cy="346.5" r="3.8"/><circle cx="1351.6" cy="346.5" r="3.8"/><path d="M1347.3,344 L1344,352.5 L1350.6,352.5 Z"/><rect x="1345" y="342" width="4.6" height="5"/></g>
<rect x="1339" y="378" width="17" height="1" fill="#c4c4c4"/><rect x="1339" y="383" width="17" height="2" fill="#c4c4c4"/><rect x="1339" y="389" width="17" height="2.5" fill="#a8a8a8"/>
<rect x="1339" y="407" width="17" height="12" fill="#c4c4c4"/>
<g fill="#3a3a3a"><rect x="1340" y="408" width="4.5" height="4.5"/><rect x="1345.5" y="408" width="4.5" height="4.5" fill="#555"/><rect x="1351" y="408" width="4" height="4.5" fill="#888"/><rect x="1340" y="413.5" width="4.5" height="4.5" fill="#888"/><rect x="1345.5" y="413.5" width="4.5" height="4.5" fill="#666"/><rect x="1351" y="413.5" width="4" height="4.5" fill="#444"/></g>
<path d="M1342.5,441 L1342.5,434.5 L1355.5,434.5 L1355.5,447.5 L1348,447.5" fill="none" stroke="#c4c4c4"/>
<rect x="1339.5" y="441.5" width="6" height="6" fill="#474747" stroke="#c4c4c4"/><rect x="1342.5" y="444.5" width="6" height="6" fill="#474747" stroke="#c4c4c4"/>
<text x="1347.5" y="489" font-family="Liberation Serif" font-style="italic" font-size="19" fill="#c4c4c4" text-anchor="middle">A</text>
</svg>
<!-- navigator mini object -->
<svg class="a" style="left:1085px;top:104px;overflow:hidden" width="240" height="176" viewBox="1085 104 240 176">
<g transform="translate(1138.4,146.6) scale(0.186)"><use href="#slab"/></g>
</svg>
<div class="a" style="left:8.15px;top:12px;font-size:22px;line-height:20px;white-space:pre;font-weight:bold;color:#e6a03a;transform:scaleX(0.8500);transform-origin:0 0">Ai</div>
<div class="a" style="left:46.53px;top:14px;font-size:12px;line-height:20px;white-space:pre;color:#d8d8d8;transform:scaleX(0.9722);transform-origin:0 0">File</div>
<div class="a" style="left:81.53px;top:14px;font-size:12px;line-height:20px;white-space:pre;color:#d8d8d8;transform:scaleX(0.9750);transform-origin:0 0">Edit</div>
<div class="a" style="left:119.00px;top:14px;font-size:12px;line-height:20px;white-space:pre;color:#d8d8d8;transform:scaleX(1.0000);transform-origin:0 0">Object</div>
<div class="a" style="left:171.00px;top:14px;font-size:12px;line-height:20px;white-space:pre;color:#d8d8d8;transform:scaleX(0.9615);transform-origin:0 0">Type</div>
<div class="a" style="left:212.71px;top:14px;font-size:12px;line-height:20px;white-space:pre;color:#d8d8d8;transform:scaleX(0.9875);transform-origin:0 0">Select</div>
<div class="a" style="left:262.40px;top:14px;font-size:12px;line-height:20px;white-space:pre;color:#d8d8d8;transform:scaleX(0.9967);transform-origin:0 0">Effect</div>
<div class="a" style="left:310.30px;top:14px;font-size:12px;line-height:20px;white-space:pre;color:#d8d8d8;transform:scaleX(0.9462);transform-origin:0 0">View</div>
<div class="a" style="left:353.00px;top:14px;font-size:12px;line-height:20px;white-space:pre;color:#d8d8d8;transform:scaleX(1.0233);transform-origin:0 0">Window</div>
<div class="a" style="left:413.43px;top:14px;font-size:12px;line-height:20px;white-space:pre;color:#d8d8d8;transform:scaleX(1.0696);transform-origin:0 0">Help</div>
<div class="a" style="left:1194.49px;top:14px;font-size:12px;line-height:20px;white-space:pre;color:#cfcfcf;transform:scaleX(1.0143);transform-origin:0 0">Layout</div>
<div class="a" style="left:12.62px;top:47px;font-size:10px;line-height:20px;white-space:pre;color:#d8d8d8;transform:scaleX(0.9782);transform-origin:0 0">No Selection</div>
<div class="a" style="left:181.97px;top:47px;font-size:10px;line-height:20px;white-space:pre;color:#e8902e;transform:scaleX(1.0333);transform-origin:0 0">Stroke:</div>
<div class="a" style="left:442.20px;top:47px;font-size:10px;line-height:20px;white-space:pre;color:#111111;transform:scaleX(0.9980);transform-origin:0 0">3 pt. Round</div>
<div class="a" style="left:532.00px;top:47px;font-size:10px;line-height:20px;white-space:pre;color:#e8902e;transform:scaleX(1.0278);transform-origin:0 0">Opacity:</div>
<div class="a" style="left:578.49px;top:47px;font-size:10px;line-height:20px;white-space:pre;color:#111111;transform:scaleX(1.0083);transform-origin:0 0">100%</div>
<div class="a" style="left:647.96px;top:47px;font-size:10px;line-height:20px;white-space:pre;color:#d8d8d8;transform:scaleX(1.0435);transform-origin:0 0">Style:</div>
<div class="a" style="left:747.29px;top:47px;font-size:10px;line-height:20px;white-space:pre;color:#e0e0e0;transform:scaleX(1.0055);transform-origin:0 0">Document Setup</div>
<div class="a" style="left:863.01px;top:47px;font-size:10px;line-height:20px;white-space:pre;color:#e0e0e0;transform:scaleX(0.9887);transform-origin:0 0">Preferences</div>
<div class="a" style="left:82.39px;top:74px;font-size:12px;line-height:20px;white-space:pre;font-weight:bold;color:#dedede;transform:scaleX(0.9112);transform-origin:0 0">realsmart.ai* @ 200% (RGB/Preview)</div>
<div class="a" style="left:82.00px;top:719px;font-size:10px;line-height:20px;white-space:pre;color:#111111;transform:scaleX(0.9600);transform-origin:0 0">200%</div>
<div class="a" style="left:182.25px;top:719px;font-size:10px;line-height:20px;white-space:pre;color:#111111;transform:scaleX(0.7500);transform-origin:0 0">1</div>
<div class="a" style="left:356.53px;top:719px;font-size:10px;line-height:20px;white-space:pre;color:#dcdcdc;transform:scaleX(0.9700);transform-origin:0 0">Selection</div>
<div class="a" style="left:1091.38px;top:85px;font-size:10px;line-height:20px;white-space:pre;font-weight:bold;color:#e0e0e0;transform:scaleX(1.0178);transform-origin:0 0">Navigator</div>
<div class="a" style="left:1152.10px;top:85px;font-size:10px;line-height:20px;white-space:pre;font-weight:bold;color:#9a9a9a;transform:scaleX(1.1000);transform-origin:0 0">Info</div>
<div class="a" style="left:1091.30px;top:286px;font-size:10px;line-height:20px;white-space:pre;color:#111111;transform:scaleX(0.9640);transform-origin:0 0">200%</div>
<div class="a" style="left:1092.40px;top:309px;font-size:10px;line-height:20px;white-space:pre;font-weight:bold;color:#9a9a9a;transform:scaleX(0.9625);transform-origin:0 0">Artboards</div>
<div class="a" style="left:1153.12px;top:309px;font-size:10px;line-height:20px;white-space:pre;font-weight:bold;color:#9a9a9a;transform:scaleX(0.9760);transform-origin:0 0">Links</div>
<div class="a" style="left:1193.50px;top:309px;font-size:10px;line-height:20px;white-space:pre;font-weight:bold;color:#e0e0e0;transform:scaleX(0.9032);transform-origin:0 0">Layers</div>
<div class="a" style="left:1182.41px;top:333px;font-size:10px;line-height:20px;white-space:pre;color:#e6e6e6;transform:scaleX(0.9875);transform-origin:0 0">Layer 3</div>
<div class="a" style="left:1182.41px;top:354px;font-size:10px;line-height:20px;white-space:pre;color:#e6e6e6;transform:scaleX(0.9875);transform-origin:0 0">Layer 2</div>
<div class="a" style="left:1182.41px;top:375px;font-size:10px;line-height:20px;white-space:pre;color:#e6e6e6;transform:scaleX(0.9875);transform-origin:0 0">Layer 4</div>
<div class="a" style="left:1182.44px;top:396px;font-size:10px;line-height:20px;white-space:pre;color:#e6e6e6;transform:scaleX(0.9562);transform-origin:0 0">Layer 1</div>
<div class="a" style="left:1090.00px;top:460px;font-size:10px;line-height:20px;white-space:pre;color:#dcdcdc;transform:scaleX(0.9658);transform-origin:0 0">4 Layers</div>
<div class="a" style="left:1098.00px;top:481px;font-size:10px;line-height:20px;white-space:pre;font-weight:bold;color:#e0e0e0;transform:scaleX(0.9615);transform-origin:0 0">Color</div>
<div class="a" style="left:1138.20px;top:481px;font-size:10px;line-height:20px;white-space:pre;font-weight:bold;color:#9a9a9a;transform:scaleX(0.9400);transform-origin:0 0">Transparency</div>
<div class="a" style="left:1215.00px;top:481px;font-size:10px;line-height:20px;white-space:pre;font-weight:bold;color:#9a9a9a;transform:scaleX(0.9707);transform-origin:0 0">Gradient</div>
<div class="a" style="left:1243.40px;top:506px;font-size:10px;line-height:20px;white-space:pre;font-weight:bold;color:#d0d0d0;transform:scaleX(1.0667);transform-origin:0 0">#</div>
<div class="a" style="left:1259.79px;top:506px;font-size:10px;line-height:20px;white-space:pre;color:#111111;transform:scaleX(1.0057);transform-origin:0 0">FFFFFF</div>
<div class="a" style="left:1098.50px;top:566px;font-size:10px;line-height:20px;white-space:pre;font-weight:bold;color:#e0e0e0;transform:scaleX(0.9812);transform-origin:0 0">Transform</div>
<div class="a" style="left:1122.00px;top:591px;font-size:10px;line-height:20px;white-space:pre;color:#8c8c8c;transform:scaleX(0.7222);transform-origin:0 0">X:</div>
<div class="a" style="left:1142.00px;top:591px;font-size:10px;line-height:20px;white-space:pre;color:#3a3a3a;transform:scaleX(1.0000);transform-origin:0 0">0 px</div>
<div class="a" style="left:1200.00px;top:591px;font-size:10px;line-height:20px;white-space:pre;color:#8c8c8c;transform:scaleX(0.9091);transform-origin:0 0">W:</div>
<div class="a" style="left:1222.00px;top:591px;font-size:10px;line-height:20px;white-space:pre;color:#3a3a3a;transform:scaleX(1.0263);transform-origin:0 0">0 px</div>
<div class="a" style="left:1122.00px;top:617px;font-size:10px;line-height:20px;white-space:pre;color:#8c8c8c;transform:scaleX(0.8125);transform-origin:0 0">Y:</div>
<div class="a" style="left:1142.00px;top:617px;font-size:10px;line-height:20px;white-space:pre;color:#3a3a3a;transform:scaleX(1.0000);transform-origin:0 0">0 px</div>
<div class="a" style="left:1198.75px;top:617px;font-size:10px;line-height:20px;white-space:pre;color:#8c8c8c;transform:scaleX(1.2500);transform-origin:0 0">H:</div>
<div class="a" style="left:1222.00px;top:617px;font-size:10px;line-height:20px;white-space:pre;color:#3a3a3a;transform:scaleX(1.0263);transform-origin:0 0">0 px</div>
<div class="a" style="left:1141.00px;top:643px;font-size:10px;line-height:20px;white-space:pre;color:#3a3a3a;transform:scaleX(1.3000);transform-origin:0 0">0°</div>
<div class="a" style="left:1222.00px;top:643px;font-size:10px;line-height:20px;white-space:pre;color:#3a3a3a;transform:scaleX(1.3111);transform-origin:0 0">0°</div>
<div class="a" style="left:1106.32px;top:672px;font-size:10px;line-height:20px;white-space:pre;color:#8a8a8a;transform:scaleX(0.9825);transform-origin:0 0">Scale Strokes &amp; Effects</div>
<div class="a" style="left:1107.30px;top:692px;font-size:10px;line-height:20px;white-space:pre;color:#8a8a8a;transform:scaleX(0.9797);transform-origin:0 0">Align to Pixel Grid</div>
<div class="a" style="left:1098.50px;top:717px;font-size:10px;line-height:20px;white-space:pre;font-weight:bold;color:#e0e0e0;transform:scaleX(0.9255);transform-origin:0 0">Character</div>
<div class="a" style="left:1156.43px;top:717px;font-size:10px;line-height:20px;white-space:pre;font-weight:bold;color:#9a9a9a;transform:scaleX(0.9750);transform-origin:0 0">Paragraph</div>
<div class="a" style="left:1219.10px;top:717px;font-size:10px;line-height:20px;white-space:pre;font-weight:bold;color:#9a9a9a;transform:scaleX(0.9833);transform-origin:0 0">OpenType</div>
</body></html>
